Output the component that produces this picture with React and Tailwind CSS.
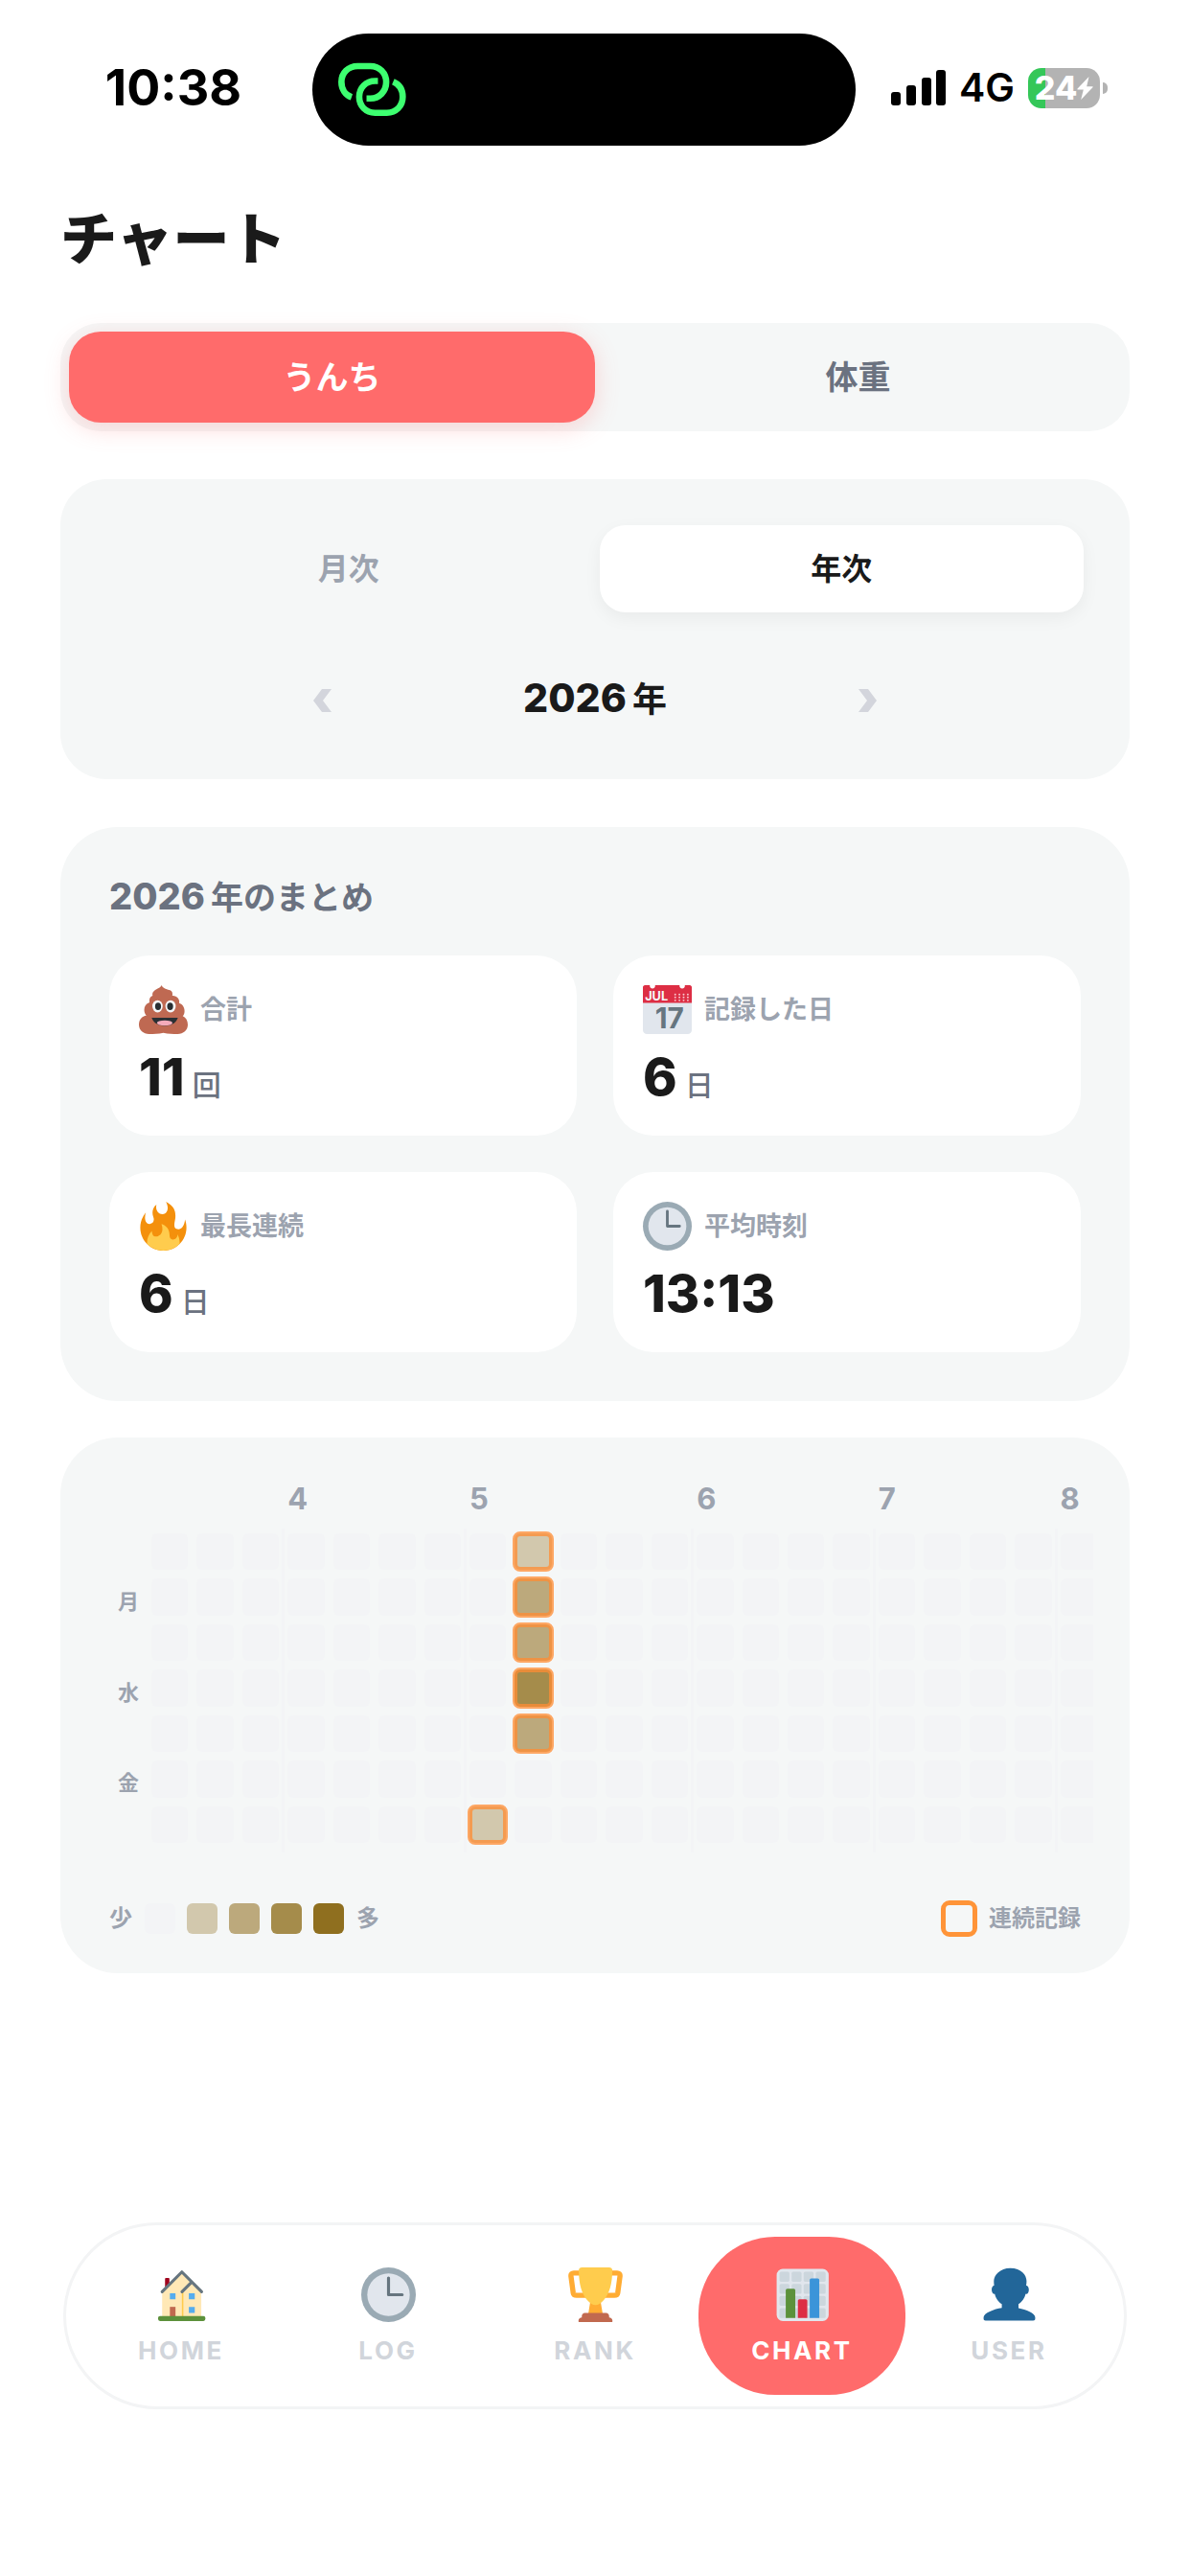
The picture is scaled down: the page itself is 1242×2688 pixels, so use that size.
const STREAK = { 8: { 0: 1, 1: 2, 2: 2, 3: 3, 4: 2 }, 7: { 6: 1 } };
const MONTHS = { 3: "4", 7: "5", 12: "6", 16: "7", 20: "8" };
const WEEKS = Array.from({ length: 21 }, (_, i) => i);
const DAYS = ["", "月", "", "水", "", "金", ""];
const LEVELS = ["bg-[#f3f4f6]", "bg-[#d2c8ad]", "bg-[#bca97c]", "bg-[#a58c4b]", "bg-[#8f6f1f]"];

function Svg({ className, children, box = "0 0 36 36" }) {
  return (
    <svg viewBox={box} className={"overflow-visible " + className} aria-hidden="true">
      {children}
    </svg>
  );
}

function Poop({ className }) {
  return (
    <Svg className={className}>
      <path
        fill="#BF6952"
        d="M16.6 0C16.2 1.8 14 2.2 12 3.6c-1.8 1.3-2.4 2.7-1.9 4.2-2 .8-2.7 2.5-2.3 4.9-2.6.9-3.9 3-3.9 5.5 0 1.6.6 3.1 1.6 4.2C2.3 22.7 0 25.3 0 29.2 0 33.3 3.2 36 7.5 36c3.5 0 6.9 0 10.5-.9 3.6.9 7 .9 10.5.9 4.3 0 7.5-2.7 7.5-6.8 0-2.9-1.3-5.3-3.7-6.4.9-1 1.3-2.4 1.3-3.8 0-3-1.8-5-4-5.7.8-2.8-1.6-5.7-5-5.5.4-1.9 0-3.4-1.6-4.1C20.5 3.2 17.4 2.2 16.6 0z"
      />
      <ellipse fill="#F5F8FA" cx="13.7" cy="15.6" rx="3.8" ry="4.5" />
      <ellipse fill="#F5F8FA" cx="23.3" cy="15.6" rx="3.8" ry="4.5" />
      <ellipse fill="#292F33" cx="14.1" cy="15.6" rx="2.2" ry="2.8" />
      <ellipse fill="#292F33" cx="23" cy="15.6" rx="2.2" ry="2.8" />
      <path fill="#292F33" d="M9.4 24h19.3c-1.4 4-5 6-9.65 6s-8.25-2-9.65-6z" />
      <ellipse fill="#F4ABBA" cx="19" cy="27.9" rx="5.7" ry="1.9" />
    </Svg>
  );
}

function Calendar({ className }) {
  return (
    <Svg className={className}>
      <path fill="#E1E6ED" d="M0 11h36v22a3 3 0 0 1-3 3H3a3 3 0 0 1-3-3z" />
      <path
        fill="#DD2E44"
        d="M1.5 0h3.6a2 2 0 1 0 3.9 0h18a2 2 0 1 0 3.9 0h3.6c.8 0 1.5.7 1.5 1.5V13H0V1.5C0 .7.7 0 1.5 0z"
      />
      <text x="1.5" y="11.3" fontSize="9" fontWeight="700" fill="#F5F8FA">
        JUL
      </text>
      <text x="9" y="32" fontSize="21" fontWeight="700" fill="#66757F">
        17
      </text>
      {[6.8, 9, 11.2].map((y) =>
        [23.8, 26.9, 30, 33.1].map((x) => <circle key={x + "-" + y} cx={x} cy={y} r="0.7" fill="#F8C5CC" />)
      )}
    </Svg>
  );
}

function Fire({ className }) {
  return (
    <Svg className={className}>
      <path
        fill="#F4900C"
        d="M35 19c0-2.062-.367-4.039-1.04-5.868-.46 5.389-3.333 8.157-6.335 6.868-2.812-1.208-.917-5.917-.777-8.164.236-3.809-.012-8.169-6.931-11.794 2.875 5.5.333 8.917-2.333 9.125-2.958.231-5.667-2.542-4.667-7.042-3.238 2.386-3.332 6.402-2.333 9 1.042 2.708-.042 4.958-2.583 5.208-2.84.28-4.418-3.041-2.963-8.333C2.52 10.965 1 14.805 1 19c0 9.389 7.611 17 17 17s17-7.611 17-17z"
      />
      <path
        fill="#FFCC4D"
        d="M28.394 23.999c.148 3.084-2.561 4.293-4.019 3.709-2.106-.843-1.541-2.291-2.083-5.291s-2.625-5.083-5.708-6c2.25 6.333-1.247 8.667-3.08 9.084-1.872.426-3.753-.001-3.968-4.007C7.352 23.668 6 26.676 6 30c0 .368.023.73.055 1.09C9.125 34.124 13.342 36 18 36s8.875-1.876 11.945-4.91c.032-.36.055-.722.055-1.09 0-2.187-.584-4.236-1.606-6.001z"
      />
    </Svg>
  );
}

function Clock({ className }) {
  return (
    <Svg className={className}>
      <circle cx="18" cy="18" r="18" fill="#9AAAB4" />
      <circle cx="18" cy="18" r="14" fill="#E1E6ED" />
      <path d="M18 7v11h9" fill="none" stroke="#66757F" strokeWidth="2" strokeLinecap="round" strokeLinejoin="round" />
    </Svg>
  );
}

function House({ className }) {
  return (
    <Svg className={className}>
      <path fill="#A0041E" d="M7.1 13V7.5c0-.3.2-.5.5-.5h1.9c.3 0 .5.2.5.5V11z" />
      <path fill="#FFE8B6" d="M5.2 33V16L18.2 3 31 16v17z" />
      <path fill="#FFCC4D" d="M18.2 16h1v17h-1z" />
      <path
        d="M5.2 16 18.2 3l13 13M18.3 16l6-6"
        fill="none"
        stroke="#66757F"
        strokeWidth="2"
        strokeLinecap="round"
        strokeLinejoin="round"
      />
      <path fill="#55ACEE" d="M10.3 17H14v4h-3.7zM22.8 17h3.9v4h-3.9zM22.8 26h3.9v4h-3.9z" />
      <path fill="#C1694F" d="M10.3 26H14v7h-3.7z" />
      <rect x="2.5" y="32" width="31.2" height="3.3" rx="1.3" fill="#5C913B" />
    </Svg>
  );
}

function Trophy({ className }) {
  return (
    <Svg className={className}>
      <path
        d="M9 3.7H3.7c-1.3 0-2 .7-1.9 1.8l1.5 11.2c.2 1.1 1 1.7 2.2 1.7h6M27 3.7h5.3c1.3 0 2 .7 1.9 1.8l-1.5 11.2c-.2 1.1-1 1.7-2.2 1.7h-6"
        fill="none"
        stroke="#FFAC33"
        strokeWidth="3.4"
      />
      <path fill="#FFAC33" d="M15 20h6l1.8 11h-9.6z" />
      <path
        fill="#FFCC4D"
        d="M9 0h18c1.2 0 2.1.8 2.1 1.9 0 9-2.1 15.6-5.6 19.6-1.9 2.2-3.7 3.3-5.5 3.3s-3.6-1.1-5.5-3.3C9 17.5 7 10.9 7 1.9 7 .8 7.9 0 9 0z"
      />
      <path
        fill="#C1694F"
        d="M11 30h14c1.1 0 2 .9 2 2v1c1.2 0 2.2.9 2.2 2v.7c0 .2-.1.3-.3.3H7.1c-.2 0-.3-.1-.3-.3V35c0-1.1 1-2 2.2-2v-1c0-1.1.9-2 2-2z"
      />
    </Svg>
  );
}

function BarChart({ className }) {
  return (
    <Svg className={className}>
      <rect x="1" y="1" width="34.3" height="34.3" rx="4" fill="#E1E6ED" />
      {[2.9, 10.9, 18.8, 26.8].map((y) =>
        [2.9, 10.9, 18.8, 26.8].map((x) => (
          <rect key={x + "-" + y} x={x} y={y} width="6.5" height="6.5" rx="1" fill="#CCD6DD" />
        ))
      )}
      <path fill="#5C913B" d="M7 33.3V15a1 1 0 0 1 1-1h4.3a1 1 0 0 1 1 1v18.3z" />
      <path fill="#DD2E44" d="M15 33.3V22a1 1 0 0 1 1-1h4.2a1 1 0 0 1 1 1v11.3z" />
      <path fill="#3B94D9" d="M22.8 33.3V8.2a1 1 0 0 1 1-1h4.3a1 1 0 0 1 1 1v25.1z" />
    </Svg>
  );
}

function Bust({ className }) {
  return (
    <Svg className={className}>
      <path
        fill="#226699"
        d="M24 26.799v-2.566c2-1.348 4.08-3.779 4.703-6.896.186.103.206.17.413.17.991 0 1.709-1.287 1.709-2.873 0-1.562-.823-2.827-1.794-2.865.187-.674.293-1.577.293-2.735C29.324 5.168 26 .527 18.541.527c-6.629 0-10.777 4.641-10.777 8.507 0 1.123.069 2.043.188 2.755-.911.137-1.629 1.352-1.629 2.845 0 1.587.804 2.873 1.796 2.873.206 0 .025-.067.209-.17C8.952 20.453 11 22.885 13 24.232v2.414c-5 .645-12 3.437-12 6.23v1.061C1 35 2.076 35 3.137 35h29.725C33.924 35 35 35 35 33.938v-1.061c0-2.615-6-5.225-11-6.078z"
      />
    </Svg>
  );
}

function StatusBar() {
  return (
    <div className="grid h-[152px] grid-cols-[326fr_567fr_349fr] items-end">
      <div className="flex h-[117px] items-center justify-center pb-1 pl-9 text-[52px] font-bold text-black">10:38</div>
      <div className="flex h-[117px] items-center rounded-full bg-black pl-[26px]">
        <Svg box="95 103 218 172" className="h-[57px] w-[73px]">
          <g fill="none" stroke="#3DFF70" strokeWidth="20">
            <path d="M139 213C119 206 107 187 107 165c0-29 22-50 51-50h40c29 0 50 22 50 50 0 30-22 52-50 52h-12" />
            <path d="M222 162h-9c-29 0-50 21-50 50s21 50 50 50h37c29 0 50-21 50-50 0-22-11-40-30-48" />
          </g>
        </Svg>
      </div>
      <div className="flex h-[117px] items-center pb-1 pl-[37px]">
        <Svg box="0 0 57 37" className="h-[37px] w-[57px]">
          <rect x="0" y="23" width="10" height="14" rx="3" />
          <rect x="16" y="16" width="10" height="21" rx="3" />
          <rect x="32" y="8" width="10" height="29" rx="3" />
          <rect x="47" y="0" width="10" height="37" rx="3" />
        </Svg>
        <span className="ml-[14px] text-[41px] font-semibold text-black">4G</span>
        <div className="ml-[14px] flex h-[42px] w-[75px] items-center justify-center rounded-[14px] bg-[linear-gradient(90deg,#35c759_24%,#b3b3b3_24%)] text-[34px] font-extrabold text-white">
          24
          <Svg box="0 0 17 24" className="h-6 w-[17px]">
            <path fill="#fff" d="M12.5 0 .6 12.6c-.5.5-.2 1 .4 1h5.800L4.200 24 16.400 11.200c.5-.5.2-1-.4-1h-5.800z" />
          </Svg>
        </div>
        <div className="ml-[3px] h-3 w-[5px] rounded-r-full bg-[#b3b3b3]" />
      </div>
    </div>
  );
}

function Stat({ icon: Icon, label, value, unit }) {
  return (
    <div className="flex flex-col gap-3 rounded-[42px] bg-white px-[31px] pt-[31px] pb-7">
      <div className="flex items-center gap-[13px]">
        <Icon className="size-[51px]" />
        <span className="text-[27px] leading-[40px] font-bold text-[#9ca3af]">{label}</span>
      </div>
      <div className="flex items-baseline gap-2 leading-[66px]">
        <span className="text-[54px] font-extrabold text-[#1a1a1a]">{value}</span>
        {unit && <span className="text-[30px] leading-[40px] font-medium text-[#6b7280]">{unit}</span>}
      </div>
    </div>
  );
}

function Heatmap() {
  return (
    <div className="flex gap-[13px] pr-[38px] pl-[60px]">
      <div className="grid w-[22px] grid-rows-7 gap-[9px] pt-14 pb-[10px] text-[22px] leading-none font-bold text-[#9ca3af]">
        {DAYS.map((d, i) => (
          <span key={i} className="flex items-center pt-2">
            {d}
          </span>
        ))}
      </div>
      <div className="min-w-0 flex-1 overflow-hidden">
        <div className="-mr-1 grid grid-cols-[repeat(21,minmax(0,1fr))] gap-x-[9px]">
          {WEEKS.map((w) => (
            <div key={w} className="relative">
              <div className="h-[49px] text-[31px] leading-[40px] font-bold text-[#9ca3af]">{MONTHS[w]}</div>
              {MONTHS[w] && <div className="absolute top-[51px] bottom-0 -left-[6px] w-[3px] bg-[#f3f4f6]" />}
              <div className="flex flex-col gap-[9px] pt-[7px] pb-[10px]">
                {DAYS.map((_, r) => {
                  const level = STREAK[w]?.[r] ?? 0;
                  return (
                    <div
                      key={r}
                      className={
                        "aspect-square rounded-[6px] " +
                        LEVELS[level] +
                        (level ? " outline-[5px] -outline-offset-[3px] outline-[#ff8c33]/75" : "")
                      }
                    />
                  );
                })}
              </div>
            </div>
          ))}
        </div>
      </div>
    </div>
  );
}

const NAV = [
  ["HOME", House],
  ["LOG", Clock],
  ["RANK", Trophy],
  ["CHART", BarChart],
  ["USER", Bust],
];

function Chevron({ className, label, d }) {
  return (
    <button aria-label={label} className={className}>
      <Svg box="0 0 20 24" className="h-6 w-5">
        <path fill="#d3d5dc" d={d} />
      </Svg>
    </button>
  );
}

export default function App() {
  return (
    <div lang="ja" className="flex min-h-screen flex-col bg-white font-['Inter','Noto_Sans_CJK_JP',sans-serif]">
      <StatusBar />
      <main className="flex flex-col px-[63px]">
        <h1 className="mt-[62px] text-[59px] leading-[72px] font-black text-[#1a1a1a]">チャート</h1>

        <div className="mt-[51px] flex rounded-[42px] bg-[#f5f7f7] p-[9px] text-[34px] leading-[51px] font-bold">
          <button className="flex-1 rounded-[33px] bg-[#ff6b6b] py-[22px] text-white shadow-[0_6px_24px_rgba(255,107,107,0.25)]">
            うんち
          </button>
          <button className="flex-1 py-[22px] text-[#6b7280]">体重</button>
        </div>

        <section className="mt-[50px] rounded-[48px] bg-[#f5f7f7] px-12 pt-12 pb-14">
          <div className="flex gap-[9px] text-[32px] leading-[45px] font-bold">
            <button className="flex-1 py-[23px] text-[#9ca3af]">月次</button>
            <button className="flex-1 rounded-[27px] bg-white py-[23px] text-[#1a1a1a] shadow-[0_6px_18px_rgba(0,0,0,0.05)]">
              年次
            </button>
          </div>
          <div className="mt-[62px] flex items-center justify-center">
            <Chevron label="前の年" className="pt-1" d="M10 0h10l-9 12 9 12H10L1 12z" />
            <p className="w-[550px] text-center text-[36px] leading-[54px] font-bold text-[#1a1a1a]">
              <span className="mr-[6px] text-[41px] font-extrabold">2026</span>年
            </p>
            <Chevron label="次の年" className="pt-1" d="M0 0h10l9 12-9 12H0l9-12z" />
          </div>
        </section>

        <section className="mt-[50px] rounded-[60px] bg-[#f5f7f7] p-[51px]">
          <h2 className="text-[34px] leading-[42px] font-bold text-[#6b7280]">
            <span className="mr-[6px] text-[38px] font-extrabold">2026</span>年のまとめ
          </h2>
          <div className="mt-[39px] grid grid-cols-2 gap-[38px]">
            <Stat icon={Poop} label="合計" value="11" unit="回" />
            <Stat icon={Calendar} label="記録した日" value="6" unit="日" />
            <Stat icon={Fire} label="最長連続" value="6" unit="日" />
            <Stat icon={Clock} label="平均時刻" value="13:13" />
          </div>
        </section>

        <section className="mt-[38px] rounded-[60px] bg-[#f5f7f7] pt-11 pb-[38px]">
          <Heatmap />
          <div className="mt-[50px] flex items-center px-[51px] text-[24px] leading-[38px] font-bold text-[#9ca3af]">
            <span>少</span>
            <div className="mx-[13px] flex gap-3">
              {LEVELS.map((c) => (
                <div key={c} className={"size-8 rounded-[6px] " + c} />
              ))}
            </div>
            <span>多</span>
            <div className="mr-3 ml-auto size-[38px] rounded-[9px] border-[5px] border-[#ff9438]" />
            <span>連続記録</span>
          </div>
        </section>
      </main>

      <nav className="mx-[66px] mt-auto mb-[174px] flex rounded-full border-[3px] border-[#f3f4f5] bg-white p-3">
        {NAV.map(([label, Icon]) => (
          <a
            key={label}
            href={"#" + label.toLowerCase()}
            className={
              "flex flex-1 flex-col items-center gap-[10px] rounded-[80px] pt-8 pb-[26px] text-[26px] leading-10 font-bold tracking-widest " +
              (label === "CHART" ? "bg-[#ff6b6b] text-white" : "text-[#d1d5db]")
            }
          >
            <Icon className="size-[57px]" />
            {label}
          </a>
        ))}
      </nav>
    </div>
  );
}
